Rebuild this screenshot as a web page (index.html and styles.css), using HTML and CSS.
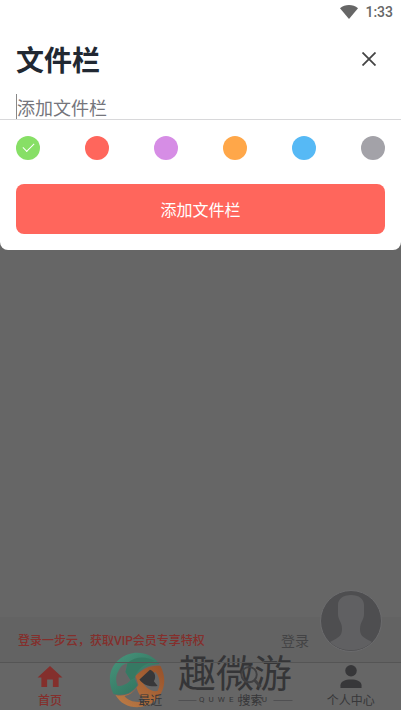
FILE: index.html
```html
<!DOCTYPE html>
<html lang="zh-CN">
  <head>
    <meta charset="utf-8" />
    <meta name="viewport" content="width=device-width, initial-scale=1" />
    <title>文件栏</title>
    <link rel="stylesheet" href="styles.css">
  </head>
  <body>
    <!-- sheet that drops down over the page -->
    <section class="sheet">
      <div class="status">
        <svg width="18" height="14" viewBox="0 0 18 14"><path d="M0 3.2C5-1 13-1 18 3.2L9 14z" fill="#666"/></svg>
        <span>1:33</span>
      </div>

      <form class="add-form">
        <div class="title-row">
          <h1>文件栏</h1>
          <button type="button" class="close" aria-label="关闭">
            <svg width="14" height="14" viewBox="0 0 14 14"><path d="M.5.5l13 13M13.5.5L.5 13.5" stroke="#444" stroke-width="1.8"/></svg>
          </button>
        </div>

        <div class="name-field">
          <input type="text" name="name" aria-label="添加文件栏" placeholder="添加文件栏" />
        </div>

        <div class="colors">
          <input type="radio" name="color" class="green" aria-label="绿色" checked />
          <input type="radio" name="color" class="red" aria-label="红色" />
          <input type="radio" name="color" class="purple" aria-label="紫色" />
          <input type="radio" name="color" class="orange" aria-label="橙色" />
          <input type="radio" name="color" class="blue" aria-label="蓝色" />
          <input type="radio" name="color" class="grey" aria-label="灰色" />
        </div>

        <button type="submit" class="submit">添加文件栏</button>
      </form>
    </section>

    <footer class="bottom">
      <div class="promo">
        <p>登录一步云，获取VIP会员专享特权</p>
        <a href="#login">登录</a>
        <svg class="avatar" width="62" height="62" viewBox="0 0 62 62">
          <circle cx="31" cy="31" r="30.5" fill="#4e4e50" stroke="#6c6c6e"/>
          <path d="M31 5c-8 0-13 4-13 10v9c0 6 4 8 4 15 0 6-2 8-12 13 11 11 31 11 42 0-10-5-12-7-12-13 0-7 4-9 4-15v-9c0-6-5-10-13-10z" fill="#606062"/>
        </svg>
      </div>

      <nav class="tabs">
        <a href="#home" class="active">
          <svg width="26" height="24" viewBox="0 0 26 24"><path d="M13 1L0 13h4v10h6v-8h6v8h6V13h4z" fill="#842f2c"/></svg>
          首页
        </a>
        <a href="#recent">
          <svg width="24" height="24" viewBox="0 0 24 24"><path d="M1 15L12 5c5 2 7 7 4 12l4 5C12 23 5 21 1 15z" fill="#373739"/></svg>
          最近
        </a>
        <a href="#search">
          <svg width="24" height="24" viewBox="0 0 24 24"><circle cx="10" cy="10" r="8" fill="none" stroke="#404042" stroke-width="2"/><path d="M16 16l6 7" stroke="#404042" stroke-width="3"/></svg>
          搜索
        </a>
        <a href="#me">
          <svg width="24" height="24" viewBox="0 0 24 24"><circle cx="12" cy="6" r="6" fill="#373739"/><path d="M1 24v-3c0-4 5-6 11-6s11 2 11 6v3z" fill="#373739"/></svg>
          个人中心
        </a>
      </nav>

      <!-- watermark shows through the tabs -->
      <div class="watermark">
        <svg width="56" height="56" viewBox="0 0 56 56">
          <defs>
            <linearGradient id="g1" x1="0" y1="0" x2="1" y2="1"><stop offset="0" stop-color="#48967d"/><stop offset="1" stop-color="#2c6b57"/></linearGradient>
            <linearGradient id="g2" x1="0" y1="1" x2="1" y2="0"><stop offset="0" stop-color="#bd7d47"/><stop offset="1" stop-color="#965029"/></linearGradient>
          </defs>
          <path d="M50 12C40-1 22-3 9 8C-1 17-2 30 4 42C14 44 22 42 28 33L25 26C30 17 38 13 50 12zM9 19C11 14 14 12 18 11L16 20L21 28C18 32 13 34 8 34C6 29 6 24 9 19z" fill="url(#g1)" fill-rule="evenodd"/>
          <path d="M18 11C26 4 37 4 45 9C34 12 28 17 25 26L21 28L16 20z" fill="#367963"/>
          <path d="M26 24C33 17 41 13 51 14C61 33 50 53 31 55C20 56 11 52 6 43C16 45 24 41 29 33zM32 28L46 20C51 26 51 33 48 39C41 40 35 35 32 28z" fill="url(#g2)" fill-rule="evenodd"/>
          <path d="M15 44C20 43 24 40 27 36C29 42 32 46 36 49C28 51 20 50 15 44z" fill="#666"/>
        </svg>
        <div class="brand">
          <strong>趣微游</strong>
          <small>QUWEIYOU</small>
        </div>
      </div>
    </footer>
  </body>
</html>
```

FILE: styles.css
```css
* {
  box-sizing: border-box;
}

body {
  margin: 0;
  min-height: 100vh;
  display: flex;
  flex-direction: column;
  justify-content: space-between;
  background: #666;
  font-family: Roboto, "Noto Sans CJK SC", sans-serif;
}

svg {
  display: block;
}

button {
  border: 0;
  padding: 0;
  font-family: inherit;
  cursor: pointer;
}

a {
  color: inherit;
  text-decoration: none;
}

.sheet {
  background: #fff;
  border-radius: 0 0 8px 8px;
}

.status {
  height: 24px;
  padding-right: 8px;
  display: flex;
  align-items: center;
  justify-content: flex-end;
  gap: 7px;
  color: #666;
  font-size: 14px;
  font-weight: 500;
}

.add-form {
  padding: 12px 16px 16px;
}

.title-row {
  display: flex;
  align-items: center;
  justify-content: space-between;
  height: 46px;
}

.title-row h1 {
  margin: 0;
  padding-top: 6px;
  color: #212832;
  font-size: 28px;
  line-height: 46px;
}

.close {
  width: 32px;
  height: 32px;
  display: grid;
  place-items: center;
  background: none;
}

/* the line runs the whole width of the sheet */
.name-field {
  margin: 12px -16px 0;
  padding: 0 16px;
  border-bottom: 1px solid #d8d8da;
}

.name-field input {
  display: block;
  width: 100%;
  height: 25px;
  padding: 4px 0 0;
  border: 0;
  border-left: 1px solid #888;
  outline: none;
  font-family: inherit;
  font-size: 18px;
}

.name-field input::placeholder {
  color: #75757c;
}

.colors {
  display: flex;
  justify-content: space-between;
  margin: 16px 0 24px;
}

.colors input {
  appearance: none;
  width: 24px;
  height: 24px;
  margin: 0;
  border-radius: 50%;
  display: grid;
  place-items: center;
}

.colors input:checked::before {
  content: "";
  width: 10px;
  height: 5px;
  margin-bottom: 4px;
  border: solid #fff;
  border-width: 0 0 1px 1px;
  transform: rotate(-45deg);
}

.green { background: #87df66; }
.red { background: #ff665c; }
.purple { background: #d68de5; }
.orange { background: #ffa749; }
.blue { background: #56b9f5; }
.grey { background: #a3a2a8; }

.submit {
  display: block;
  width: 100%;
  height: 50px;
  border-radius: 8px;
  background: #ff665c;
  color: #fff;
  font-size: 16px;
}

.bottom {
  position: relative;
}

.promo {
  position: relative;
  height: 45px;
  padding: 0 92px 0 18px;
  display: flex;
  align-items: center;
  justify-content: space-between;
  background: #636363;
  color: #842f2c;
  font-size: 12px;
  font-weight: 500;
}

.promo p {
  margin: 0;
}

.promo a {
  color: #434345;
  font-size: 14px;
  font-weight: 400;
}

/* sticks out above the bar */
.avatar {
  position: absolute;
  right: 19px;
  bottom: 10px;
}

.tabs {
  position: relative;
  z-index: 1;
  display: flex;
  height: 48px;
  border-top: 1px solid #555;
}

.tabs a {
  flex: 1;
  display: flex;
  flex-direction: column;
  align-items: center;
  gap: 4px;
  padding-top: 2px;
  color: #373739;
  font-size: 12px;
  line-height: 18px;
}

.tabs .active {
  color: #842f2c;
  font-weight: 500;
}

.watermark {
  position: absolute;
  left: 50%;
  bottom: 2px;
  transform: translateX(-50%);
  display: flex;
  align-items: center;
  gap: 13px;
  color: #353537;
  pointer-events: none;
}

.brand {
  display: flex;
  flex-direction: column;
  align-items: center;
}

.brand strong {
  font-size: 38px;
  font-weight: 400;
  line-height: 40px;
}

.brand small {
  display: flex;
  align-items: center;
  gap: 3px;
  width: 100%;
  font-size: 8px;
  line-height: 12px;
  letter-spacing: 4px;
}

.brand small::before,
.brand small::after {
  content: "";
  flex: 1;
  height: 1px;
  background: #505052;
}
```
